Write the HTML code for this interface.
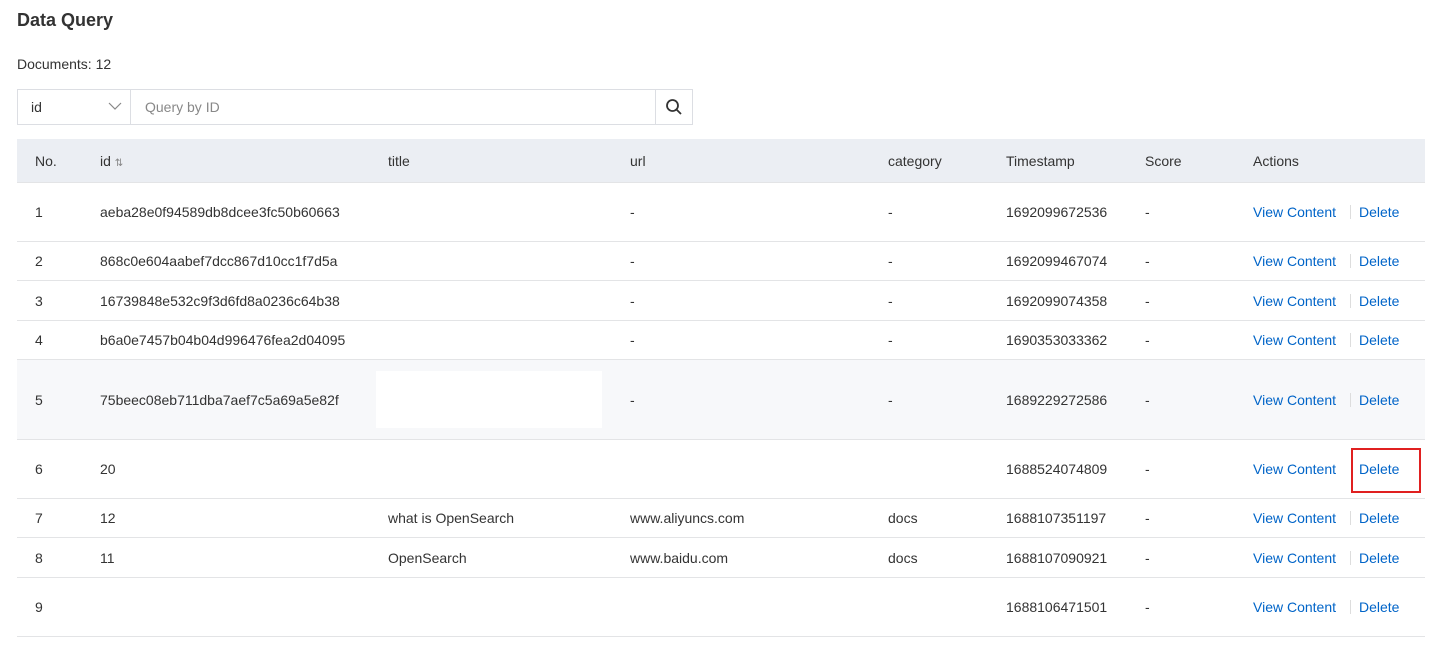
<!DOCTYPE html>
<html><head><meta charset="utf-8"><style>
body{margin:0;width:1432px;height:651px;overflow:hidden;background:#fff;font-family:"Liberation Sans",sans-serif;font-size:14px;color:#333;position:relative}
.a{position:absolute;white-space:nowrap}
.row{position:absolute;left:17px;width:1408px;border-bottom:1px solid #e3e4e6}
.row span{position:absolute;top:50%;transform:translateY(-50%);white-space:nowrap}
.b{color:#0064c8}
.sep{position:absolute;width:1px;height:14px;background:#ddd;top:50%;transform:translateY(-50%);left:1333px}
</style></head><body>
<div class="a" style="left:17px;top:10px;font-size:18px;font-weight:bold;color:#333">Data Query</div>
<div class="a" style="left:17px;top:56px">Documents: 12</div>
<div class="a" style="left:17px;top:89px;width:674px;height:34px;border:1px solid #dcdee3"></div>
<div class="a" style="left:130px;top:89px;width:1px;height:36px;background:#dcdee3"></div>
<div class="a" style="left:655px;top:89px;width:1px;height:36px;background:#dcdee3"></div>
<div class="a" style="left:31px;top:99px">id</div>
<svg class="a" style="left:108px;top:101px" width="14" height="10"><path d="M1 2l6 6 6-6" fill="none" stroke="#888" stroke-width="1.2"/></svg>
<div class="a" style="left:145px;top:99px;color:#888">Query by ID</div>
<svg class="a" style="left:665px;top:98px" width="18" height="18"><circle cx="7.5" cy="7.5" r="5.5" fill="none" stroke="#333" stroke-width="1.8"/><path d="M11.5 11.5l4.5 4.5" stroke="#333" stroke-width="1.8"/></svg>
<div class="row" style="top:139px;height:43px;background:#ebeef3;border-bottom-color:#e3e4e6">
<span style="left:18px">No.</span><span style="left:83px">id <small style="font-size:10px;color:#888">⇅</small></span><span style="left:371px">title</span><span style="left:613px">url</span><span style="left:871px">category</span><span style="left:989px">Timestamp</span><span style="left:1128px">Score</span><span style="left:1236px">Actions</span></div>
<div class="row" style="top:183px;height:58px"><span style="left:18px">1</span><span style="left:83px">aeba28e0f94589db8dcee3fc50b60663</span><span style="left:613px">-</span><span style="left:871px">-</span><span style="left:989px">1692099672536</span><span style="left:1128px">-</span><span class="b" style="left:1236px">View Content</span><i class="sep"></i><span class="b" style="left:1342px">Delete</span></div>
<div class="row" style="top:242px;height:38px"><span style="left:18px">2</span><span style="left:83px">868c0e604aabef7dcc867d10cc1f7d5a</span><span style="left:613px">-</span><span style="left:871px">-</span><span style="left:989px">1692099467074</span><span style="left:1128px">-</span><span class="b" style="left:1236px">View Content</span><i class="sep"></i><span class="b" style="left:1342px">Delete</span></div>
<div class="row" style="top:281px;height:39px"><span style="left:18px">3</span><span style="left:83px">16739848e532c9f3d6fd8a0236c64b38</span><span style="left:613px">-</span><span style="left:871px">-</span><span style="left:989px">1692099074358</span><span style="left:1128px">-</span><span class="b" style="left:1236px">View Content</span><i class="sep"></i><span class="b" style="left:1342px">Delete</span></div>
<div class="row" style="top:321px;height:38px"><span style="left:18px">4</span><span style="left:83px">b6a0e7457b04b04d996476fea2d04095</span><span style="left:613px">-</span><span style="left:871px">-</span><span style="left:989px">1690353033362</span><span style="left:1128px">-</span><span class="b" style="left:1236px">View Content</span><i class="sep"></i><span class="b" style="left:1342px">Delete</span></div>
<div class="row" style="top:360px;height:79px;background:#f7f8fa"><span style="left:18px">5</span><span style="left:83px">75beec08eb711dba7aef7c5a69a5e82f</span><div style="position:absolute;left:359px;top:11px;width:226px;height:57px;background:#fff"></div><span style="left:613px">-</span><span style="left:871px">-</span><span style="left:989px">1689229272586</span><span style="left:1128px">-</span><span class="b" style="left:1236px">View Content</span><i class="sep"></i><span class="b" style="left:1342px">Delete</span></div>
<div class="row" style="top:440px;height:58px"><span style="left:18px">6</span><span style="left:83px">20</span><span style="left:989px">1688524074809</span><span style="left:1128px">-</span><span class="b" style="left:1236px">View Content</span><span class="b" style="left:1342px">Delete</span><div style="position:absolute;left:1334px;top:8px;width:70px;height:45px;border:2px solid #e02020;box-sizing:border-box"></div></div>
<div class="row" style="top:499px;height:38px"><span style="left:18px">7</span><span style="left:83px">12</span><span style="left:371px">what is OpenSearch</span><span style="left:613px">www.aliyuncs.com</span><span style="left:871px">docs</span><span style="left:989px">1688107351197</span><span style="left:1128px">-</span><span class="b" style="left:1236px">View Content</span><i class="sep"></i><span class="b" style="left:1342px">Delete</span></div>
<div class="row" style="top:538px;height:39px"><span style="left:18px">8</span><span style="left:83px">11</span><span style="left:371px">OpenSearch</span><span style="left:613px">www.baidu.com</span><span style="left:871px">docs</span><span style="left:989px">1688107090921</span><span style="left:1128px">-</span><span class="b" style="left:1236px">View Content</span><i class="sep"></i><span class="b" style="left:1342px">Delete</span></div>
<div class="row" style="top:578px;height:58px"><span style="left:18px">9</span><span style="left:989px">1688106471501</span><span style="left:1128px">-</span><span class="b" style="left:1236px">View Content</span><i class="sep"></i><span class="b" style="left:1342px">Delete</span></div>
</body></html>
